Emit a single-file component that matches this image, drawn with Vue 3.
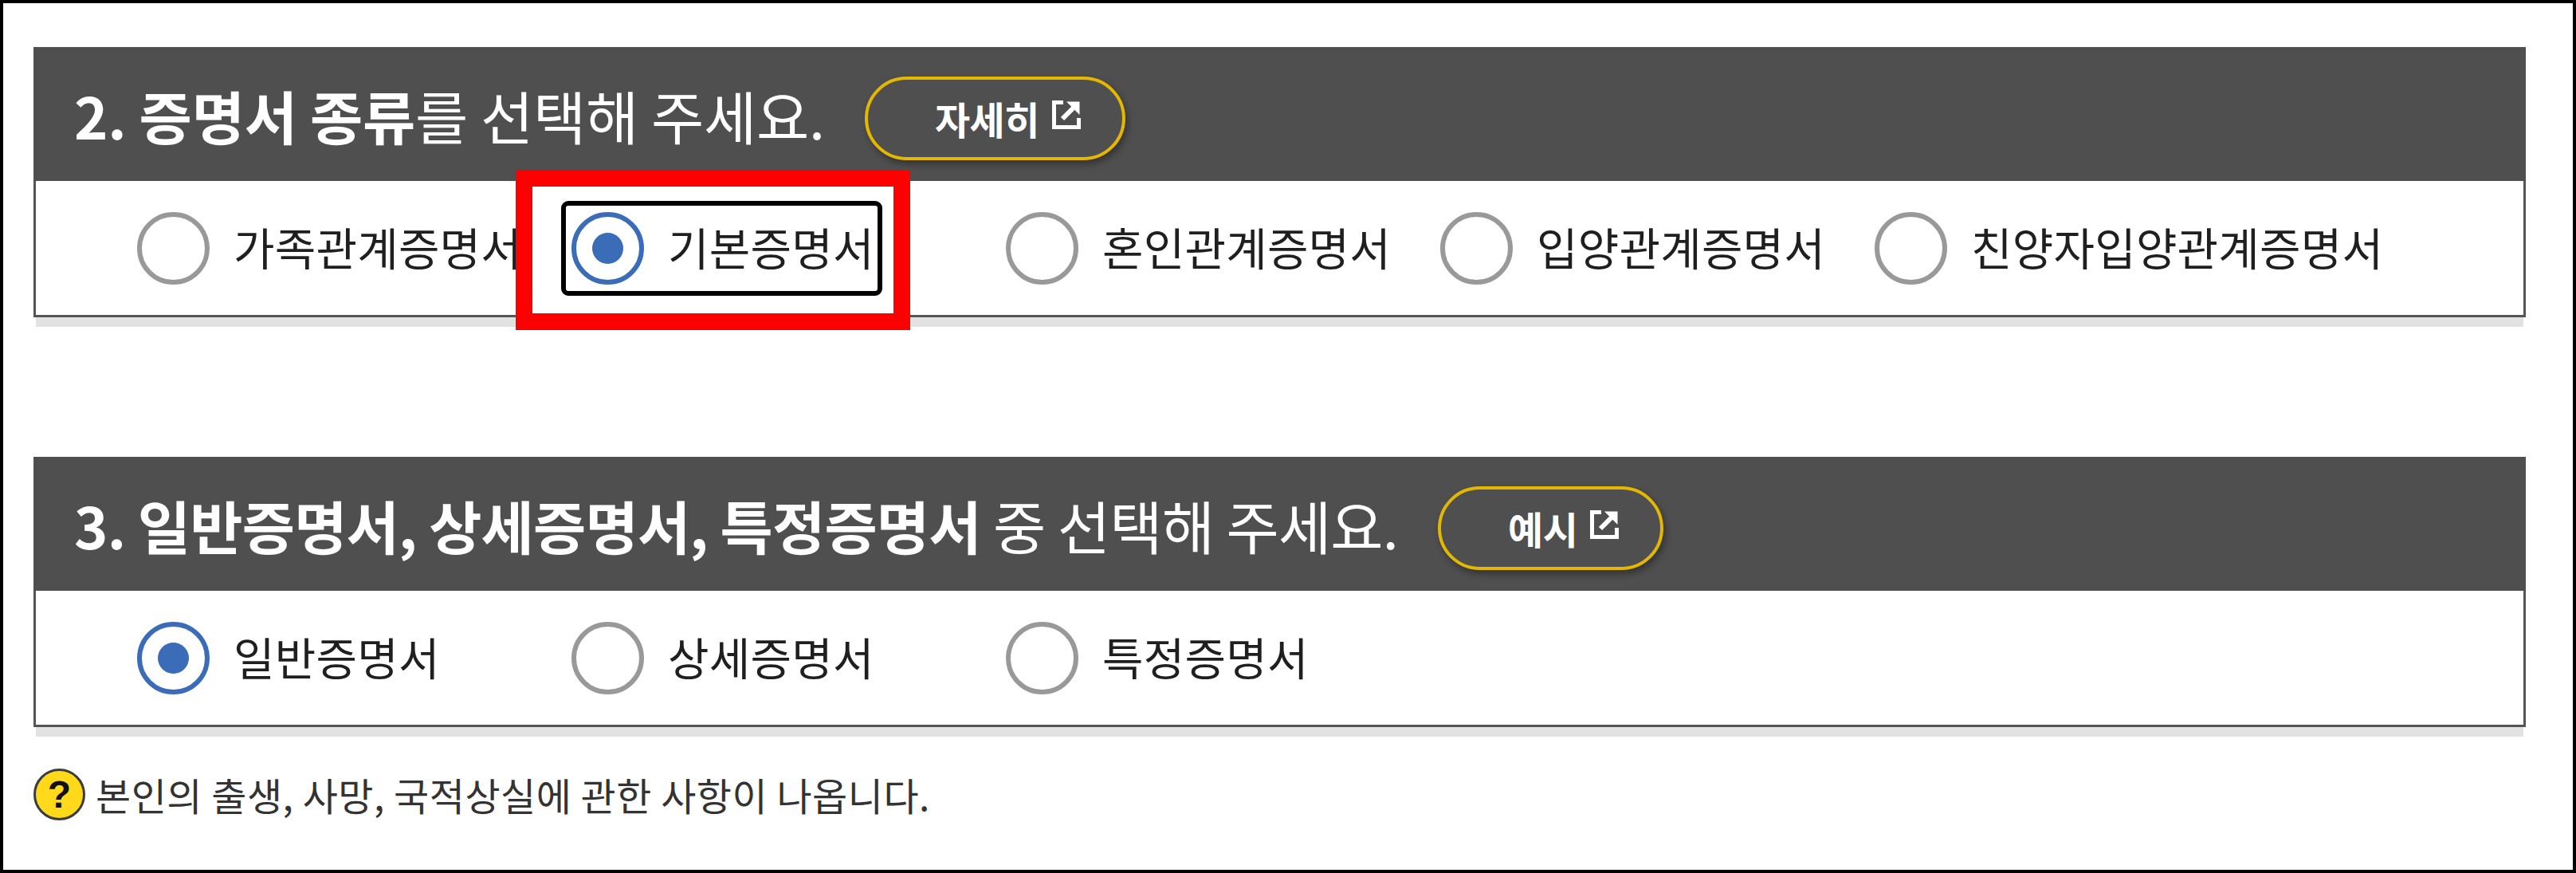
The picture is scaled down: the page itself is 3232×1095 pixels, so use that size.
<script setup>
const first = [
  { label: '가족관계증명서' },
  { label: '기본증명서', checked: true, focus: true },
  { label: '혼인관계증명서' },
  { label: '입양관계증명서' },
  { label: '친양자입양관계증명서' }
]
const second = [
  { label: '일반증명서', checked: true },
  { label: '상세증명서' },
  { label: '특정증명서' }
]
const sections = [
  { num: '2.', strong: '증명서 종류', rest: '를 선택해 주세요.', btn: '자세히', options: first, wide: true },
  { num: '3.', strong: '일반증명서, 상세증명서, 특정증명서', rest: ' 중 선택해 주세요.', btn: '예시', options: second }
]
</script>

<template>
  <div class="frame">
    <section v-for="s in sections" :key="s.num" class="section">
      <header class="head">
        <h2 class="title" :class="{ wide: s.wide }"><b>{{ s.num }} {{ s.strong }}</b>{{ s.rest }}</h2>
        <button class="more" type="button">
          <span>{{ s.btn }}</span>
          <svg class="ext" viewBox="0 0 36 36" fill="none" aria-hidden="true">
            <path d="M14 2.5H2.5v31h31V22" stroke="#fff" stroke-width="5" />
            <path d="M13 23L28 8" stroke="#fff" stroke-width="6" />
            <path d="M18 1.5h16.5V18z" fill="#fff" />
          </svg>
        </button>
      </header>
      <div class="body">
        <label v-for="o in s.options" :key="o.label" class="option">
          <span class="radio" :class="{ on: o.checked }"></span>
          <span class="label">{{ o.label }}</span>
          <template v-if="o.focus">
            <span class="focus"></span>
            <span class="mark"></span>
          </template>
        </label>
      </div>
    </section>
    <p class="note">
      <span class="help">?</span>
      <span>본인의 출생, 사망, 국적상실에 관한 사항이 나옵니다.</span>
    </p>
  </div>
</template>

<style scoped>
.frame {
  width: 3232px;
  height: 1095px;
  box-sizing: border-box;
  border: 4px solid #000;
  padding: 55px 59px 0 38px;
  background: #fff;
  font-family: "Noto Sans CJK KR", "Noto Sans", sans-serif;
  color: #1f1f1f;
  overflow: hidden;
}
.section + .section {
  margin-top: 175px;
}
.head {
  height: 168px;
  box-sizing: border-box;
  background: #4f4f4f;
  display: flex;
  align-items: center;
  padding-left: 51px;
}
.title {
  margin: 2px 0 0;
  font-size: 72px;
  font-weight: 400;
  letter-spacing: -0.8px;
  line-height: 1;
  color: #fff;
  white-space: pre;
}
.title.wide {
  letter-spacing: -0.2px;
}
.title b {
  font-weight: 700;
}
.more {
  margin: 10px 0 0 50px;
  height: 105px;
  box-sizing: border-box;
  border: 4px solid #e4b700;
  border-radius: 53px;
  background: #4f4f4f;
  box-shadow: 3px 5px 9px rgba(0, 0, 0, 0.35);
  display: flex;
  align-items: center;
  gap: 16px;
  padding: 0 52px 0 84px;
  color: #fff;
  font-family: inherit;
  font-size: 48px;
  font-weight: 700;
  letter-spacing: -0.5px;
}
.ext {
  width: 36px;
  height: 36px;
  margin-top: -8px;
}
.body {
  height: 171px;
  box-sizing: border-box;
  border: 3px solid #555;
  border-top: 0;
  background: #fff;
  box-shadow: 0 15px 0 -3px #e2e2e2;
  display: grid;
  grid-template-columns: repeat(5, 545px);
  align-items: center;
  padding: 0 0 0 129px;
  font-size: 56px;
}
.option {
  position: relative;
  left: -2px;
  display: flex;
  align-items: center;
  gap: 30px;
  white-space: nowrap;
  margin-top: 1px;
}
.radio {
  width: 91px;
  height: 91px;
  flex: none;
  box-sizing: border-box;
  border: 6px solid #999;
  border-radius: 50%;
  background: #fff;
  display: flex;
  align-items: center;
  justify-content: center;
}
.radio.on {
  border-color: #3a6cb8;
}
.radio.on::after {
  content: "";
  width: 39px;
  height: 39px;
  border-radius: 50%;
  background: #3a6cb8;
}
.label {
  letter-spacing: 0.2px;
  margin-bottom: 6px;
  position: relative;
  z-index: 2;
}
.focus {
  position: absolute;
  left: -13px;
  top: -14px;
  width: 403px;
  height: 119px;
  box-sizing: border-box;
  border: 6px solid #000;
  border-radius: 9px;
  pointer-events: none;
}
.mark {
  position: absolute;
  left: -70px;
  top: -53px;
  width: 495px;
  height: 201px;
  box-sizing: border-box;
  border: 21px solid #f00;
  pointer-events: none;
  z-index: 3;
}
.note {
  margin: 52px 0 0;
  display: flex;
  align-items: center;
  gap: 13px;
  font-size: 48px;
  letter-spacing: 0.5px;
  line-height: 65px;
  color: #333;
}
.help {
  width: 65px;
  height: 65px;
  flex: none;
  box-sizing: border-box;
  border: 3px solid #3c3c3c;
  border-radius: 50%;
  background: #ffd91a;
  color: #111;
  font-family: "Liberation Sans", sans-serif;
  font-size: 48px;
  font-weight: 700;
  letter-spacing: 0;
  line-height: 59px;
  text-align: center;
}
</style>
